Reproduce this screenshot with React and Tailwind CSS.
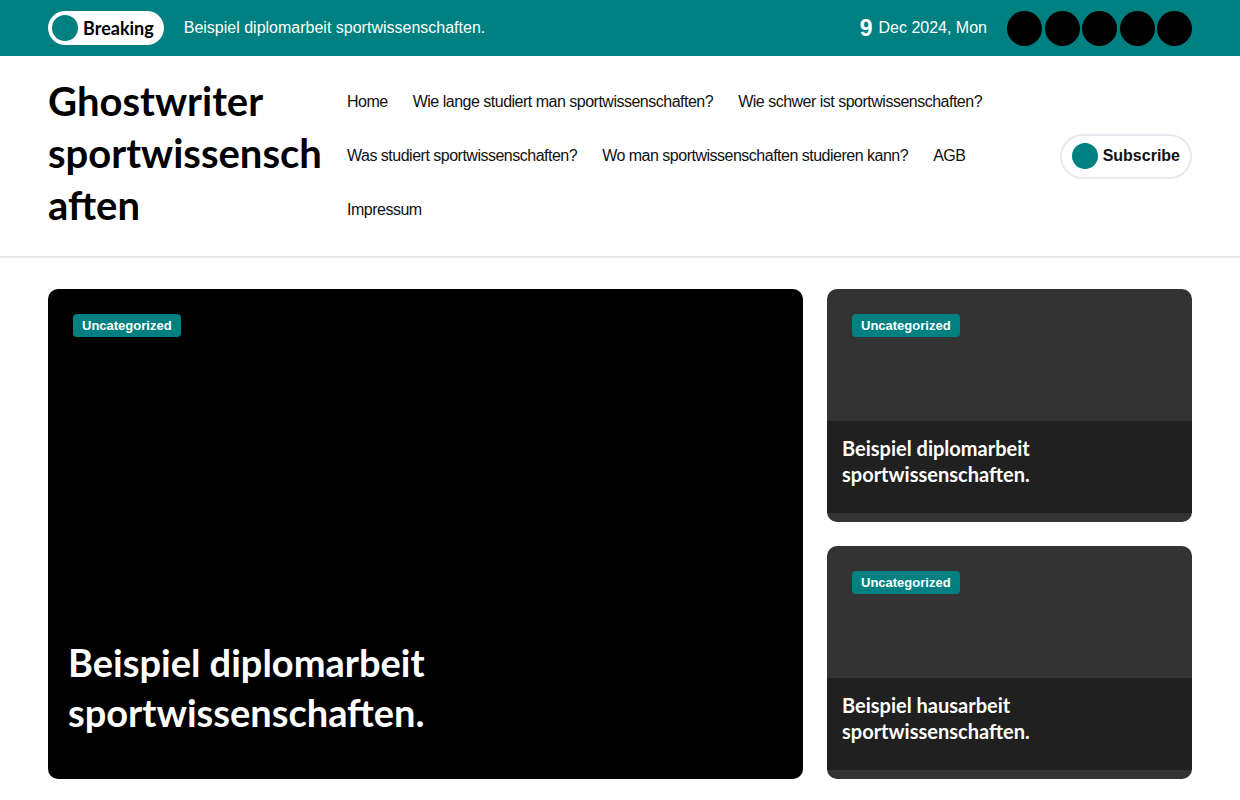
import React from "react";

const head = { fontFamily: "Lato, 'Noto Sans', sans-serif" };
const body = { fontFamily: "'Liberation Sans', Arial, sans-serif" };

function Badge() {
  return (
    <span className="inline-block rounded-[4px] bg-[#008080] px-[9px] h-[23px] leading-[23px] text-[13px] font-bold text-white">
      Uncategorized
    </span>
  );
}

function SideCard({ title }) {
  return (
    <div className="flex h-[233px] flex-col overflow-hidden rounded-[10px] bg-[#333333]">
      <div className="h-[132px] px-[25px] pt-[24px]">
        <Badge />
      </div>
      <div className="bg-[#202020] px-[15px] pt-[14px] pb-[26px]">
        <h3 style={head} className="text-[20px] font-bold leading-[26px] text-white">
          Beispiel {title}
          <br />
          sportwissenschaften.
        </h3>
      </div>
    </div>
  );
}

export default function App() {
  const nav = [
    "Home",
    "Wie lange studiert man sportwissenschaften?",
    "Wie schwer ist sportwissenschaften?",
    "Was studiert sportwissenschaften?",
    "Wo man sportwissenschaften studieren kann?",
    "AGB",
    "Impressum",
  ];
  return (
    <div style={body} className="min-h-[800px] bg-white">
      {/* top bar */}
      <div className="h-[56px] bg-[#008080]">
        <div className="mx-auto flex h-full w-[1144px] items-center">
          <div className="flex h-[34px] items-center rounded-full bg-white pl-[4px] pr-[10px]">
            <span className="h-[26px] w-[26px] rounded-full bg-[#008080]" />
            <span style={head} className="ml-[5px] text-[18px] font-bold text-black">
              Breaking
            </span>
          </div>
          <span className="ml-[20px] text-[16px] text-white">
            Beispiel diplomarbeit sportwissenschaften.
          </span>
          <div className="ml-auto flex items-center text-white">
            <span className="text-[23px] font-bold leading-none">9</span>
            <span className="ml-[6px] text-[16px]">Dec 2024, Mon</span>
          </div>
          <div className="ml-[20px] flex gap-[2.5px]">
            {[0, 1, 2, 3, 4].map((i) => (
              <span key={i} className="h-[35px] w-[35px] rounded-full bg-black" />
            ))}
          </div>
        </div>
      </div>

      {/* header */}
      <div className="border-b-2 border-[#e3e8eb]">
        <div className="mx-auto flex w-[1144px] items-center py-[19px]">
          <h1
            style={head}
            className="mb-[6px] w-[275px] shrink-0 text-[40px] font-bold leading-[52px] text-black"
          >
            Ghostwriter
            <br />
            sportwissensch
            <br />
            aften
          </h1>
          <nav className="ml-[24px] flex flex-1 flex-wrap gap-x-[25px]">
            {nav.map((n) => (
              <a
                key={n}
                className="flex h-[54px] items-center text-[16px] tracking-[-0.5px] text-[#111]"
              >
                {n}
              </a>
            ))}
          </nav>
          <button className="ml-[24px] flex h-[45px] shrink-0 items-center rounded-full border-2 border-[#e6eaee] pl-[10px] pr-[10px]">
            <span className="h-[26px] w-[26px] rounded-full bg-[#008080]" />
            <span className="ml-[5px] text-[16px] font-bold text-[#111]">Subscribe</span>
          </button>
        </div>
      </div>

      {/* main */}
      <div className="mx-auto mt-[31px] flex w-[1144px] gap-[24px]">
        <div className="flex h-[490px] w-[755px] flex-col justify-between rounded-[10px] bg-black">
          <div className="px-[25px] pt-[24px]">
            <Badge />
          </div>
          <h2
            style={head}
            className="px-[20px] pb-[42px] text-[38px] font-bold leading-[50px] text-white"
          >
            Beispiel diplomarbeit
            <br />
            sportwissenschaften.
          </h2>
        </div>
        <div className="flex flex-1 flex-col gap-[24px]">
          <SideCard title="diplomarbeit" />
          <SideCard title="hausarbeit" />
        </div>
      </div>
    </div>
  );
}
